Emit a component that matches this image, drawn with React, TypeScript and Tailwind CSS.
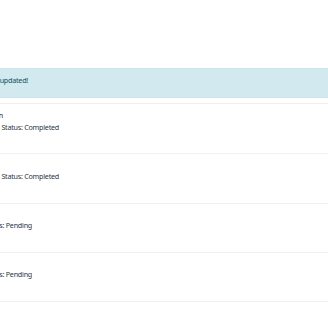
import React from "react";

const items = [
  { title: "Homepage redesign", titleEnd: "w-[3px]", status: "Priority: High - Status: Completed", statusEnd: "w-[59px]", h: "h-[50px]", pt: "pt-[5px]" },
  { title: "Write documentation", titleEnd: "w-[1px] -ml-[6px]", status: "Priority: Low - Status: Completed", statusEnd: "w-[59px]", h: "h-[50px]", pt: "pt-[4px]" },
  { title: "Fix login bug", titleEnd: "w-[1px] -ml-[6px]", status: "Priority: Medium - Status: Pending", statusEnd: "w-[32px]", h: "h-[49px]", pt: "pt-[3px]" },
  { title: "Deploy release", titleEnd: "w-[1px] -ml-[6px]", status: "Priority: High - Status: Pending", statusEnd: "w-[32px]", h: "h-[49px]", pt: "pt-[3px]" },
];

export default function App() {
  return (
    <div className="w-[328px] h-[320px] overflow-hidden bg-white font-['Noto_Sans',sans-serif]">
      <div className="h-[68px]" />
      <div className="h-[30px] border-y border-[#c9e6ec] bg-[#d1e9ef] pt-[5px]">
        <div className="w-[28px] flex justify-end whitespace-nowrap text-[7.2px] tracking-[-0.25px] leading-[12px] text-[#0c5460]">
          Your task list has been updated!
        </div>
      </div>
      <div className="mt-[5px] border-t border-[#f0f0f0]">
        {items.map((it, i) => (
          <div key={i} className={`${it.h} border-b border-[#f0f0f0] ${it.pt}`}>
            <div className={`${it.titleEnd} flex justify-end whitespace-nowrap text-[7.2px] tracking-[-0.25px] leading-[12px] text-[#212c3a]`}>
              {it.title}
            </div>
            <div className={`${it.statusEnd} flex justify-end whitespace-nowrap text-[7.2px] tracking-[-0.25px] leading-[12px] text-[#2a3646]`}>
              {it.status}
            </div>
          </div>
        ))}
      </div>
    </div>
  );
}
